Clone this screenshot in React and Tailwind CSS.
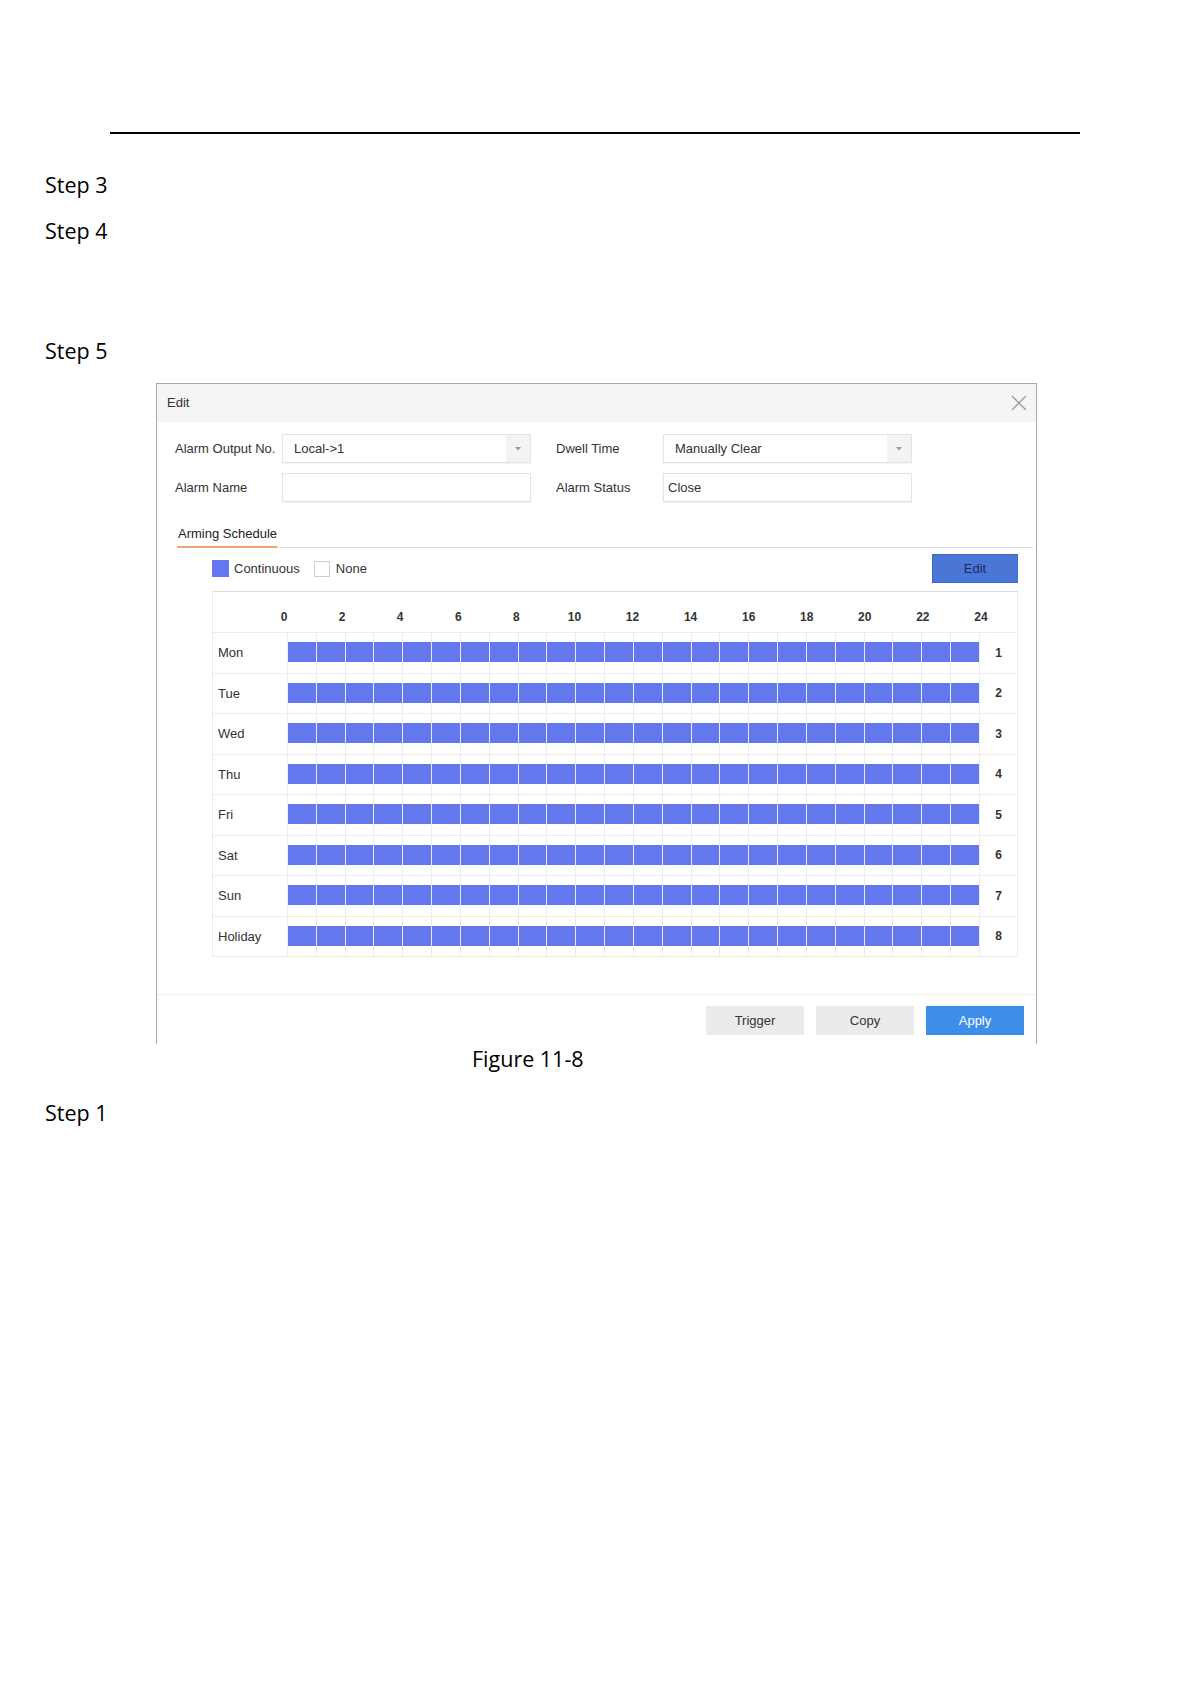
import React from 'react';

const HOURS = [0, 2, 4, 6, 8, 10, 12, 14, 16, 18, 20, 22, 24];
const DAYS = ['Mon', 'Tue', 'Wed', 'Thu', 'Fri', 'Sat', 'Sun', 'Holiday'];
const CELLS = Array.from({ length: 24 }, (_, i) => i);

const Caret = () => (
  <svg width="6" height="4" viewBox="0 0 6 4">
    <path d="M0 0 L6 0 L3 3.5 Z" fill="#9a9a9a" />
  </svg>
);

const SelectBox = ({ value }) => (
  <div className="w-[249px] h-[29px] flex border border-[#e3e3e3] shadow-[0_1px_1px_rgba(0,0,0,0.04)] bg-white">
    <div className="flex-1 flex items-center pl-[11px] text-[13px] text-[#333]">{value}</div>
    <div className="w-[24px] flex items-center justify-center bg-[#f3f3f3]">
      <Caret />
    </div>
  </div>
);

const TextBox = ({ value }) => (
  <div className="w-[249px] h-[29px] flex items-center pl-[4px] border border-[#e3e3e3] shadow-[0_1px_1px_rgba(0,0,0,0.04)] bg-white text-[13px] text-[#333]">
    {value}
  </div>
);

const FieldLabel = ({ children }) => (
  <div className="w-[107px] text-[13px] text-[#333] leading-none">{children}</div>
);

const ScheduleRow = ({ day, index }) => (
  <div className="flex h-[40.5px] border-t border-[#ececec]">
    <div className="w-[74px] flex items-center pl-[5px] text-[13px] text-[#333]">{day}</div>
    <div className="w-[692px] flex">
      {CELLS.map((c) => (
        <div key={c} className="flex-1 border-l border-[#ebebeb]">
          <div className="mt-[9px] h-[20px] bg-[#6478ee]" />
        </div>
      ))}
    </div>
    <div className="flex-1 flex items-center justify-center border-l border-[#ebebeb] text-[12px] font-bold text-[#333]">
      {index + 1}
    </div>
  </div>
);

const EditDialog = () => (
  <div
    className="ml-[156px] mt-[17px] w-[881px] h-[661px] overflow-hidden border-t border-l border-r border-[#a9a9a9] bg-white flex flex-col"
    style={{ fontFamily: '"Liberation Sans", Arial, sans-serif' }}
  >
    {/* title bar */}
    <div className="h-[38px] flex-none flex items-center justify-between pl-[10px] pr-[9px] bg-[#f5f5f5]">
      <span className="text-[13px] text-[#333]">Edit</span>
      <svg width="16" height="16" viewBox="0 0 16 16">
        <path d="M1 1 L15 15 M15 1 L1 15" stroke="#9c9c9c" strokeWidth="1.3" fill="none" />
      </svg>
    </div>

    {/* form */}
    <div className="pt-[12px] pl-[18px] flex flex-col gap-[10px]">
      <div className="flex items-center">
        <FieldLabel>Alarm Output No.</FieldLabel>
        <SelectBox value="Local->1" />
        <div className="w-[25px]" />
        <FieldLabel>Dwell Time</FieldLabel>
        <SelectBox value="Manually Clear" />
      </div>
      <div className="flex items-center">
        <FieldLabel>Alarm Name</FieldLabel>
        <TextBox value="" />
        <div className="w-[25px]" />
        <FieldLabel>Alarm Status</FieldLabel>
        <TextBox value="Close" />
      </div>
    </div>

    {/* tab */}
    <div className="mt-[24px] ml-[20px] mr-[3px] flex border-b border-[#dcdcdc]">
      <div className="w-[100px] -mb-px pl-px pb-[4px] border-b-2 border-[#f0a672] text-[13px] leading-[16px] text-[#222]">
        Arming Schedule
      </div>
    </div>

    {/* schedule */}
    <div className="ml-[55px] mr-[18px]">
      <div className="mt-[6px] h-[29px] flex items-center">
        <div className="w-[17px] h-[17px] bg-[#6477ee]" />
        <span className="ml-[5px] text-[13px] text-[#333]">Continuous</span>
        <div className="ml-[14px] w-[16px] h-[16px] border border-[#cfcfcf] bg-white" />
        <span className="ml-[6px] text-[13px] text-[#333]">None</span>
        <div className="flex-1" />
        <button className="w-[86px] h-[29px] bg-[#4a77d6] border border-[#3f68c2] text-[13px] text-[#1b2b5c]">
          Edit
        </button>
      </div>

      <div className="mt-[8px] border-t border-b border-l border-r border-t-[#dedede] border-[#ececec]">
        <div className="flex h-[40px]">
          <div className="w-[71px]" />
          <div className="w-[697px] flex justify-between items-end pb-[8px]">
            {HOURS.map((h) => (
              <div key={h} className="w-0 flex justify-center">
                <span className="whitespace-nowrap text-[12px] leading-[14px] font-bold text-[#333]">{h}</span>
              </div>
            ))}
          </div>
        </div>
        {DAYS.map((d, i) => (
          <ScheduleRow key={d} day={d} index={i} />
        ))}
      </div>
    </div>

    {/* footer */}
    <div className="mt-[37px] border-t border-[#efefef]" />
    <div className="mt-[11px] pr-[12px] flex justify-end gap-[12px]">
      <button className="w-[98px] h-[29px] bg-[#ebebeb] text-[13px] text-[#333]">Trigger</button>
      <button className="w-[98px] h-[29px] bg-[#ebebeb] text-[13px] text-[#333]">Copy</button>
      <button className="w-[98px] h-[29px] bg-[#3d8ee8] text-[13px] text-white">Apply</button>
    </div>
  </div>
);

export default function App() {
  const doc = { fontFamily: '"Open Sans", "Noto Sans", sans-serif' };
  return (
    <div className="w-[1191px] min-h-[1684px] bg-white flex flex-col pt-[132px]" style={doc}>
      <div className="ml-[110px] w-[970px] h-[2px] bg-black" />

      <p className="mt-[36px] pl-[45px] text-[21.5px] leading-[30px] text-black">Step 3</p>
      <p className="mt-[16px] pl-[45px] text-[21.5px] leading-[30px] text-black">Step 4</p>
      <p className="mt-[90px] pl-[45px] text-[21.5px] leading-[30px] text-black">Step 5</p>

      <EditDialog />

      <p className="ml-[472px] text-[21.5px] leading-[30px] text-black">Figure 11-8</p>
      <p className="mt-[24px] pl-[45px] text-[21.5px] leading-[30px] text-black">Step 1</p>
    </div>
  );
}
